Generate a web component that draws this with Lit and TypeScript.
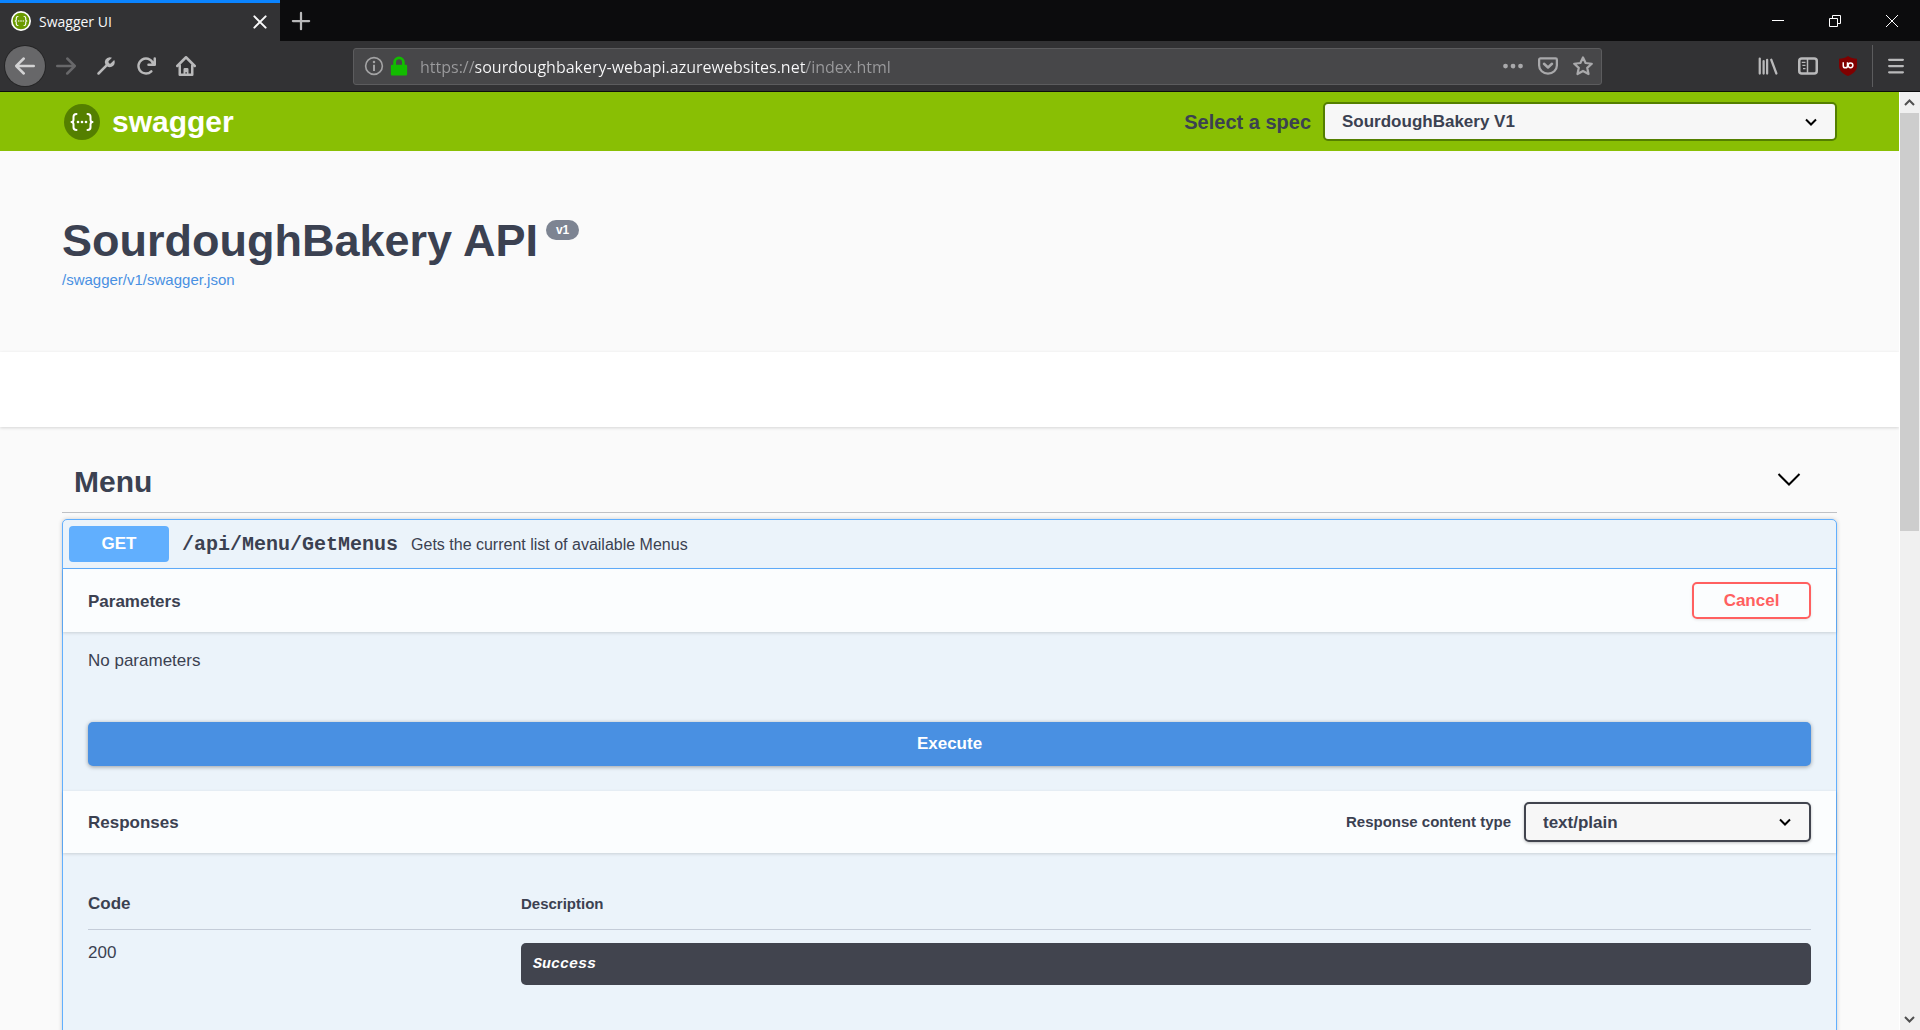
import { LitElement, html, css, svg } from "lit";
import { customElement, property } from "lit/decorators.js";

const braces = svg`
  <g fill="none" stroke="#fff" stroke-width="2" stroke-linecap="round" stroke-linejoin="round">
    <path d="M12.500 10c-2 0-3 .8-3 2.800v2.700c0 1.500-.7 2.500-2 2.500 1.300 0 2 1 2 2.500v2.700c0 2 1 2.800 3 2.800" />
    <path d="M23.500 10c2 0 3 .8 3 2.800v2.700c0 1.500.7 2.500 2 2.500-1.300 0-2 1-2 2.500v2.700c0 2-1 2.800-3 2.800" />
  </g>
  <g fill="#fff"><circle cx="14" cy="18" r="1.300" /><circle cx="18" cy="18" r="1.300" /><circle cx="22" cy="18" r="1.300" /></g>`;

const icons: Record<string, unknown> = {
  back: svg`<path d="M15 7H3.414l4.293-4.293a1 1 0 0 0-1.414-1.414l-6 6a1 1 0 0 0 0 1.414l6 6a1 1 0 0 0 1.414-1.414L3.414 9H15a1 1 0 0 0 0-2z" />`,
  forward: svg`<path d="M15.707 7.293l-6-6a1 1 0 0 0-1.414 1.414L12.586 7H1a1 1 0 0 0 0 2h11.586l-4.293 4.293a1 1 0 1 0 1.414 1.414l6-6a1 1 0 0 0 0-1.414z" />`,
  wrench: svg`<path d="M14.555 3.2l-2.434 2.436a1.243 1.243 0 1 1-1.757-1.757L12.8 1.445A3.956 3.956 0 0 0 11 1a3.976 3.976 0 0 0-3.434 6.02l-6.273 6.273a1 1 0 1 0 1.414 1.414L8.98 8.434A3.96 3.96 0 0 0 11 9a4 4 0 0 0 4-4 3.956 3.956 0 0 0-.445-1.8z" />`,
  reload: svg`<path d="M15 1a1 1 0 0 0-1 1v2.418A6.995 6.995 0 1 0 8 15a6.954 6.954 0 0 0 4.95-2.05 1 1 0 0 0-1.414-1.414A5.019 5.019 0 1 1 12.549 6H10a1 1 0 0 0 0 2h5a1 1 0 0 0 1-1V2a1 1 0 0 0-1-1z" />`,
  home: svg`<g fill="none" stroke="currentColor" stroke-width="2" stroke-linecap="round" stroke-linejoin="round"><path d="M1 8l7-7 7 7" /><path d="M3 7.500V15h10V7.500" /></g><path d="M6 15v-4.500a1 1 0 0 1 1-1h2a1 1 0 0 1 1 1V15H8.700v-2H7.500v2z" />`,
  info: svg`<circle cx="8" cy="8" r="6.700" fill="none" stroke="currentColor" stroke-width="1.300" /><circle cx="8" cy="4.800" r="1" /><path d="M7.200 7h1.600v5H7.200z" />`,
  lock: svg`<path d="M2.500 7h11a1 1 0 0 1 1 1v6.500a1 1 0 0 1-1 1h-11a1 1 0 0 1-1-1V8a1 1 0 0 1 1-1z" /><path d="M4.500 8V5a3.500 3.500 0 0 1 7 0v3" fill="none" stroke="currentColor" stroke-width="2.200" />`,
  dots: svg`<circle cx="2" cy="8" r="1.900" /><circle cx="8" cy="8" r="1.900" /><circle cx="14" cy="8" r="1.900" />`,
  pocket: svg`<g fill="none" stroke="currentColor" stroke-width="1.800" stroke-linecap="round" stroke-linejoin="round"><path d="M1.900 1.900h12.200a1 1 0 0 1 1 1V7.500a7.100 6.600 0 0 1-14.200 0V2.900a1 1 0 0 1 1-1z" /><path d="M4.800 6.200L8 9.200l3.200-3" stroke-width="2" /></g>`,
  star: svg`<path d="M8 1.200l2.100 4.400 4.900.6-3.600 3.300 1 4.900L8 12l-4.400 2.400 1-4.900L1 6.200l4.900-.6z" fill="none" stroke="currentColor" stroke-width="1.800" stroke-linejoin="round" />`,
  library: svg`<g fill="none" stroke="currentColor" stroke-width="1.800" stroke-linecap="round"><path d="M1.400 2v12M4.500 4v10M7.300 3v11M10.600 3l4.100 11" /></g>`,
  sidebar: svg`<rect x="1" y="2" width="14" height="12" rx="2" fill="none" stroke="currentColor" stroke-width="2" /><path d="M7 2h1.200v12H7z" /><path d="M3 4.500h3v1H3zM3.500 7h2.500v1H3.500zM4 9.500h2v1H4z" />`,
  menu: svg`<g fill="none" stroke="currentColor" stroke-width="1.800" stroke-linecap="round"><path d="M2.500 3h11M2.500 8h11M2.500 13h11" /></g>`,
  plus: svg`<path d="M8 1.500v13M1.500 8h13" fill="none" stroke="currentColor" stroke-width="1.800" stroke-linecap="round" />`,
  tabClose: svg`<path d="M3.500 3.500l9 9M12.500 3.500l-9 9" fill="none" stroke="currentColor" stroke-width="1.600" stroke-linecap="round" />`,
  shield: svg`<path d="M8 0c2 1.500 4.500 2.200 7.200 2.200V8c0 4-3.200 6.200-7.200 8-4-1.800-7.200-4-7.200-8V2.200C3.500 2.200 6 1.500 8 0z" fill="#800000" /><g fill="none" stroke="#fff" stroke-width="1.200"><path d="M4.200 5v2.800a1.700 1.700 0 0 0 3.400 0V5" /><circle cx="10" cy="7.400" r="1.900" /></g>`,
};

@customElement("ui-icon")
export class UiIcon extends LitElement {
  @property() name = "";

  static styles = css`
    :host { display: block; width: 20px; height: 20px; }
    .icon { display: block; width: 100%; height: 100%; fill: currentColor; }
  `;

  render() {
    return html`<svg class="icon" viewBox="0 0 16 16" aria-hidden="true">${icons[this.name]}</svg>`;
  }
}

@customElement("browser-chrome")
export class BrowserChrome extends LitElement {
  static styles = css`
    :host { display: block; font-family: "Open Sans", "Noto Sans", sans-serif; color: #b9b9ba; background: #323234; border-bottom: 1px solid #0c0c0d; }
    button { border: 0; padding: 0; margin: 0; background: none; color: inherit; display: grid; place-items: center; }
    .tabs { display: flex; height: 41px; background: #0c0c0d; }
    .tab { display: flex; align-items: center; gap: 8px; width: 280px; box-sizing: border-box; padding: 0 10px 0 11px; background: #323234; border-top: 3px solid #0a84ff; color: #f9f9fa; font-size: 14px; line-height: 34px; }
    .favicon { width: 20px; height: 20px; margin-bottom: 2px; }
    .tab-title { flex: 1; }
    .new-tab { width: 42px; }
    .window { display: flex; margin-left: auto; color: #fff; }
    .window button { width: 57px; }
    .window svg { width: 14px; height: 14px; fill: none; stroke: currentColor; }
    .bar { display: flex; align-items: center; height: 50px; padding: 0 4px 0 5px; }
    .nav { width: 40px; height: 40px; }
    .bar .round { margin-right: 1px; background: #676769; border-radius: 50%; box-shadow: 0 0 0 1px #252526; color: #d2d2d3; }
    .off { color: #68686a; }
    .field { flex: 1; display: flex; align-items: center; gap: 5px; height: 37px; box-sizing: border-box; margin: 0 146px 0 147px; padding: 0 8px 0 10px; background: #474749; border: 1px solid #5c5c5e; border-radius: 3px; }
    .secure { color: #12bc00; }
    .info { color: #a3a3a4; }
    .url { flex: 1; min-width: 0; border: 0; outline: 0; padding: 2px 0 0; margin-left: 6px; height: 30px; font: 16px "Open Sans", "Noto Sans", sans-serif;
      background: linear-gradient(90deg, #9b9b9d 55px, #f9f9fa 55px, #f9f9fa 386px, #9b9b9d 386px);
      -webkit-background-clip: text; background-clip: text; -webkit-text-fill-color: transparent; color: #f9f9fa; }
    .actions { display: flex; gap: 15px; color: #a9a9ab; }
    .divider { width: 1px; height: 42px; background: #5c5c5e; margin: 0 3px 0 4px; }
  `;

  private nav(name: string, label: string, extra = "") {
    return html`<button class="nav ${extra}" aria-label=${label}><ui-icon name=${name}></ui-icon></button>`;
  }

  render() {
    return html`
      <div class="tabs">
        <div class="tab">
          <svg class="favicon" viewBox="0 0 36 36" aria-hidden="true"><circle cx="18" cy="18" r="16.500" fill="#6a9a00" stroke="#fff" stroke-width="3" />${braces}</svg>
          <span class="tab-title">Swagger UI</span>
          <button aria-label="Close tab"><ui-icon name="tabClose"></ui-icon></button>
        </div>
        <button class="new-tab" aria-label="New tab"><ui-icon name="plus"></ui-icon></button>
        <div class="window">
          <button aria-label="Minimize"><svg viewBox="0 0 14 14"><path d="M1 6.500h12" /></svg></button>
          <button aria-label="Restore"><svg viewBox="0 0 14 14"><path d="M1.500 4.500h8v8h-8zM4.500 4.500v-3h8v8h-3" /></svg></button>
          <button aria-label="Close"><svg viewBox="0 0 14 14"><path d="M1 1l12 12M13 1L1 13" /></svg></button>
        </div>
      </div>
      <div class="bar">
        ${this.nav("back", "Back", "round")} ${this.nav("forward", "Forward", "off")}
        ${this.nav("wrench", "Developer tools")} ${this.nav("reload", "Reload")} ${this.nav("home", "Home")}
        <div class="field">
          <ui-icon class="info" name="info"></ui-icon>
          <ui-icon class="secure" name="lock"></ui-icon>
          <input class="url" aria-label="Address" spellcheck="false" value="https://sourdoughbakery-webapi.azurewebsites.net/index.html" />
          <div class="actions">
            <button aria-label="Page actions"><ui-icon name="dots"></ui-icon></button>
            <button aria-label="Save to Pocket"><ui-icon name="pocket"></ui-icon></button>
            <button aria-label="Bookmark"><ui-icon name="star"></ui-icon></button>
          </div>
        </div>
        ${this.nav("library", "Library")} ${this.nav("sidebar", "Sidebars")} ${this.nav("shield", "uBlock Origin")}
        <div class="divider"></div>
        ${this.nav("menu", "Menu")}
      </div>
    `;
  }
}

@customElement("swagger-page")
export class SwaggerPage extends LitElement {
  static styles = css`
    :host { display: block; color: #3b4151; background: #fafafa; font-family: "Liberation Sans", Arial, sans-serif; font-size: 17px; line-height: 20px; }
    h1, h2, h3, h4, p { margin: 0; }
    button { font: inherit; cursor: pointer; }
    .wrapper { box-sizing: border-box; max-width: 1825px; margin: 0 auto; padding: 0 25px; }
    .topbar { background: #89bf04; }
    .topbar .wrapper { display: flex; align-items: center; height: 59px; }
    .logo { display: flex; align-items: center; gap: 12px; color: #fff; font-size: 30px; line-height: 36px; font-weight: 700; text-decoration: none; padding-left: 2px; }
    .logo svg { width: 36px; height: 36px; }
    .spec { flex: 1; display: flex; align-items: center; justify-content: flex-end; gap: 12px; font-size: 20px; font-weight: 700; }
    .select { display: grid; align-items: center; }
    .select > * { grid-area: 1 / 1; }
    .select svg { justify-self: end; width: 14px; height: 14px; margin-right: 19px; fill: none; stroke: #000; stroke-width: 2; pointer-events: none; }
    select { appearance: none; box-sizing: border-box; width: 100%; height: 40px; padding: 0 17px; border: 2px solid #41444e; border-radius: 5px; background: #f7f7f7; color: #3b4151; font: 700 17px "Liberation Sans", Arial, sans-serif; box-shadow: 0 1px 3px rgba(0, 0, 0, 0.25); }
    .spec .select { width: 514px; }
    .spec select { height: 39px; border-color: #547f00; box-shadow: none; }
    .info { padding: 63px 0 61px; }
    .title { display: flex; align-items: flex-start; gap: 8px; margin-bottom: 1px; font-size: 45px; line-height: 54px; font-weight: 700; }
    .version { margin-top: 6px; padding: 0 10px; border-radius: 10px; background: #7d8492; color: #fff; font-size: 12px; line-height: 20px; }
    .spec-link { color: #4990e2; font-size: 15px; line-height: 22px; text-decoration: none; }
    .scheme { height: 75px; background: #fff; box-shadow: 0 1px 3px rgba(0, 0, 0, 0.15); }
    .tag { display: flex; align-items: center; justify-content: space-between; margin-top: 25px; padding: 12px 36px 12px 12px; height: 36px; border-bottom: 1px solid #bfc1c5; }
    .tag h2 { font-size: 30px; line-height: 36px; }
    .tag svg { width: 24px; height: 24px; fill: none; stroke: #000; stroke-width: 2; }
    .tag button { border: 0; background: none; padding: 0; display: block; }
    .block { margin-top: 6px; border: 1px solid #61affe; border-radius: 5px; background: #ebf3fa; box-shadow: 0 0 4px rgba(0, 0, 0, 0.19); padding-bottom: 120px; }
    .summary { display: flex; align-items: center; padding: 6px; border-bottom: 1px solid #61affe; }
    .method { width: 100px; border-radius: 4px; background: #61affe; color: #fff; text-align: center; font-weight: 700; line-height: 36px; }
    .path { margin-left: 13px; font: 700 20px "Liberation Mono", monospace; }
    .about { margin-left: 13px; font-size: 16px; line-height: 22px; padding-top: 2px; }
    .head { display: flex; align-items: center; justify-content: space-between; padding: 0 25px; height: 63px; background: rgba(255, 255, 255, 0.8); box-shadow: 0 1px 3px rgba(0, 0, 0, 0.15); }
    .head h4 { font-size: 17px; padding-top: 2px; }
    .head.short { height: 62px; }
    .cancel { width: 119px; height: 37px; border: 2px solid #ff6060; border-radius: 5px; background: transparent; color: #ff6060; font-weight: 700; box-shadow: 0 1px 3px rgba(0, 0, 0, 0.1); }
    .params { padding: 19px 25px 25px; }
    .execute { display: block; width: 100%; height: 44px; margin-top: 51px; border: 0; border-radius: 5px; background: #4990e2; color: #fff; font-weight: 700; box-shadow: 0 1px 4px rgba(0, 0, 0, 0.35); }
    .type { display: flex; align-items: center; gap: 13px; font-size: 15px; font-weight: 700; }
    .type .select { width: 287px; }
    .responses { padding: 26px 25px 25px; }
    table { width: 100%; border-collapse: collapse; table-layout: fixed; }
    th { text-align: left; padding: 15px 0; border-bottom: 1px solid #c4ccd8; }
    td { vertical-align: top; padding: 13px 0 0; }
    .code { width: 433px; }
    .small { font-size: 15px; }
    .message { padding: 12px 12px 10px; border-radius: 5px; background: #41444e; color: #fff; font: italic 700 15px/20px "Liberation Mono", monospace; }
  `;

  private arrow() {
    return html`<svg viewBox="0 0 14 14" aria-hidden="true"><path d="M2 4.500l5 5 5-5" /></svg>`;
  }

  render() {
    return html`
      <header class="topbar">
        <div class="wrapper">
          <a class="logo" href="#">
            <svg viewBox="0 0 36 36" aria-hidden="true"><circle cx="18" cy="18" r="18" fill="#547f00" />${braces}</svg>
            <span>swagger</span>
          </a>
          <div class="spec">
            <label for="spec">Select a spec</label>
            <div class="select"><select id="spec"><option>SourdoughBakery V1</option></select>${this.arrow()}</div>
          </div>
        </div>
      </header>
      <div class="wrapper">
        <div class="info">
          <h1 class="title">SourdoughBakery API <span class="version">v1</span></h1>
          <a class="spec-link" href="#">/swagger/v1/swagger.json</a>
        </div>
      </div>
      <div class="scheme"></div>
      <main class="wrapper">
        <div class="tag">
          <h2>Menu</h2>
          <button aria-label="Collapse Menu"><svg viewBox="0 0 24 24"><path d="M1.500 6l10.500 10.500L22.500 6" /></svg></button>
        </div>
        <section class="block">
          <div class="summary">
            <span class="method">GET</span>
            <span class="path">/api/Menu/GetMenus</span>
            <span class="about">Gets the current list of available Menus</span>
          </div>
          <div class="head"><h4>Parameters</h4><button class="cancel">Cancel</button></div>
          <div class="params">
            <p>No parameters</p>
            <button class="execute">Execute</button>
          </div>
          <div class="head short">
            <h4>Responses</h4>
            <div class="type">
              <label for="type">Response content type</label>
              <div class="select"><select id="type"><option>text/plain</option></select>${this.arrow()}</div>
            </div>
          </div>
          <div class="responses">
            <table>
              <thead><tr><th class="code">Code</th><th class="small">Description</th></tr></thead>
              <tbody><tr><td>200</td><td><div class="message">Success</div></td></tr></tbody>
            </table>
          </div>
        </section>
      </main>
    `;
  }
}

@customElement("app-root")
export class AppRoot extends LitElement {
  static styles = css`
    :host { display: flex; flex-direction: column; height: 100vh; overflow: hidden; }
    .view { flex: 1; min-height: 0; display: flex; }
    .page { flex: 1; min-width: 0; overflow: hidden; }
    .scroll { width: 20px; border-left: 1px solid #fff; background: #f0f0f0; display: flex; flex-direction: column; }
    .scroll svg { width: 20px; height: 21px; flex: none; fill: none; stroke: #505050; stroke-width: 2; }
    .thumb { flex: 7; width: 19px; background: #cdcdcd; }
    .rest { flex: 8; }
  `;

  render() {
    return html`
      <browser-chrome></browser-chrome>
      <div class="view">
        <swagger-page class="page"></swagger-page>
        <div class="scroll" aria-hidden="true">
          <svg viewBox="0 0 20 21"><path d="M5 13l4.500-4.500L14 13" /></svg>
          <div class="thumb"></div>
          <div class="rest"></div>
          <svg viewBox="0 0 20 21"><path d="M5 8l4.500 4.500L14 8" /></svg>
        </div>
      </div>
    `;
  }
}
